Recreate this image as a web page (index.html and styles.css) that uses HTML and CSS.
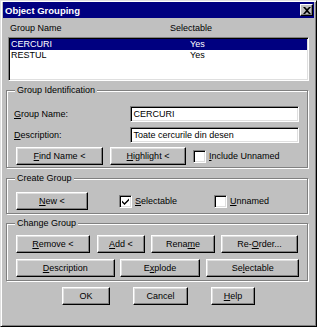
FILE: index.html
```html
<!DOCTYPE html>
<html lang="en">
<head>
    <meta charset="UTF-8">
    <title>Object Grouping</title>
    <link rel="stylesheet" href="styles.css">
</head>
<body>
    <div class="dialog">
        <div class="titlebar">
            <span class="title">Object Grouping</span>
            <span class="close">
                <svg width="8" height="7" viewBox="0 0 8 7"><path d="M0 0h2l2 2 2-2h2L5 3.5 8 7H6L4 5 2 7H0l3-3.5z" fill="#000"/></svg>
            </span>
        </div>
        <div class="content">
            <div class="list-head">
                <span class="col-name">Group Name</span>
                <span>Selectable</span>
            </div>
            <div class="listbox">
                <div class="row selected"><span class="col-name">CERCURI</span><span>Yes</span></div>
                <div class="row"><span class="col-name">RESTUL</span><span>Yes</span></div>
            </div>

            <fieldset class="group group-ident">
                <legend>Group Identification</legend>
                <div class="field field-first">
                    <label><u>G</u>roup Name:</label>
                    <div class="input">CERCURI</div>
                </div>
                <div class="field">
                    <label><u>D</u>escription:</label>
                    <div class="input">Toate cercurile din desen</div>
                </div>
                <div class="btn-row">
                    <button class="btn w-find"><u>F</u>ind Name &lt;</button>
                    <button class="btn w-highlight"><u>H</u>ighlight &lt;</button>
                    <span class="check-item check-include"><span class="check"></span><u>I</u>nclude Unnamed</span>
                </div>
            </fieldset>

            <fieldset class="group group-create">
                <legend>Create Group</legend>
                <div class="btn-row">
                    <button class="btn w-new"><u>N</u>ew &lt;</button>
                    <span class="check-item check-selectable">
                        <span class="check">
                            <svg width="9" height="9" viewBox="0 0 9 9"><path d="M1 3.5l2.5 2.5L8 1.5v2L3.5 8 1 5.5z" fill="#000"/></svg>
                        </span><u>S</u>electable
                    </span>
                    <span class="check-item"><span class="check"></span><u>U</u>nnamed</span>
                </div>
            </fieldset>

            <fieldset class="group group-change">
                <legend>Change Group</legend>
                <div class="btn-row row-one">
                    <button class="btn w-remove"><u>R</u>emove &lt;</button>
                    <button class="btn w-add"><u>A</u>dd &lt;</button>
                    <button class="btn w-rename">Rena<u>m</u>e</button>
                    <button class="btn w-reorder">Re-<u>O</u>rder...</button>
                </div>
                <div class="btn-row row-two">
                    <button class="btn w-desc"><u>D</u>escription</button>
                    <button class="btn w-explode">E<u>x</u>plode</button>
                    <button class="btn w-selectable">Se<u>l</u>ectable</button>
                </div>
            </fieldset>

            <div class="dialog-buttons">
                <button class="btn w-ok">OK</button>
                <button class="btn w-cancel">Cancel</button>
                <button class="btn w-help"><u>H</u>elp</button>
            </div>
        </div>
    </div>
</body>
</html>
```

FILE: styles.css
```css
* {
    box-sizing: border-box;
}

body {
    margin: 0;
    background: #fff;
    font-family: "Liberation Sans", Arial, sans-serif;
    font-size: 9px;
    color: #000;
}

.dialog {
    width: 317px;
    height: 327px;
    background: #c0c0c0;
    border: 1px solid;
    border-color: #dfdfdf #000 #000 #dfdfdf;
    box-shadow: inset 1px 1px #fff, inset -1px -1px #808080;
    padding: 1px 2px 0 2px;
}

.titlebar {
    height: 16px;
    background: #000080;
    color: #fff;
    font-weight: bold;
    font-size: 9.5px;
    display: flex;
    align-items: center;
    justify-content: space-between;
    padding: 0 1px 0 2px;
}

.close {
    width: 13px;
    height: 12px;
    background: #c0c0c0;
    border: 1px solid;
    border-color: #fff #000 #000 #fff;
    box-shadow: inset -1px -1px #808080;
    display: flex;
    align-items: center;
    justify-content: center;
}

.content {
    padding: 0 6px 0 3px;
}

.list-head {
    display: flex;
    height: 15px;
    line-height: 12px;
    margin-top: 4px;
    padding-left: 4px;
}

.list-head .col-name {
    width: 160px;
}

.listbox {
    margin-left: 2px;
    width: 301px;
    height: 44px;
    background: #fff;
    border: 1px solid;
    border-color: #808080 #fff #fff #808080;
    box-shadow: inset 1px 1px #000, inset -1px -1px #dfdfdf;
    padding: 1px;
}

.row {
    display: flex;
    height: 11px;
    line-height: 11px;
    padding-left: 1px;
}

.row .col-name {
    width: 179px;
}

.row.selected {
    background: #000080;
    color: #fff;
}

.group {
    margin: 3px 0 0;
    width: 302px;
    min-width: 0;
    padding: 0 8px 2px;
    border: 1px solid #808080;
    box-shadow: inset 1px 1px #fff, 1px 1px #fff;
}

.group legend {
    padding: 0 2px;
    line-height: 13px;
    background: #c0c0c0;
}

.group-create {
    margin-top: 4px;
    padding-bottom: 3px;
}

.group-change {
    padding-bottom: 3px;
}

.field {
    display: flex;
    align-items: center;
    height: 16px;
    margin-top: 5px;
}

.field-first {
    margin-top: 9px;
}

.field label {
    width: 116px;
    margin-left: -1px;
}

.input {
    width: 170px;
    height: 16px;
    background: #fff;
    border: 1px solid;
    border-color: #808080 #fff #fff #808080;
    box-shadow: inset 1px 1px #000, inset -1px -1px #dfdfdf;
    padding-left: 3px;
    line-height: 14px;
}

.btn-row {
    display: flex;
    align-items: center;
    margin-top: 4px;
    padding-left: 1px;
}

.group-create .btn-row {
    margin-top: 7px;
}

.group-change .row-one {
    margin-top: 5px;
}

.group-change .row-two {
    margin-top: 6px;
}

.btn {
    height: 18px;
    padding: 0;
    font: inherit;
    color: #000;
    background: #c0c0c0;
    border: 1px solid;
    border-color: #fff #000 #000 #fff;
    box-shadow: inset -1px -1px #808080, inset 1px 1px #dfdfdf;
    text-align: center;
}

.btn + .btn {
    margin-left: 7px;
}

.w-find { width: 87px; }
.w-highlight { width: 76px; }
.w-new { width: 72px; }
.w-remove { width: 74px; }
.w-add { width: 48px; }
.w-rename { width: 64px; margin-left: 6px !important; }
.w-reorder { width: 77px; margin-left: 6px !important; }
.w-desc { width: 99px; }
.w-explode { width: 81px; margin-left: 5px !important; }
.w-selectable { width: 93px; margin-left: 6px !important; }
.w-ok { width: 48px; }
.w-cancel { width: 55px; margin-left: 23px !important; }
.w-help { width: 44px; margin-left: 23px !important; }

.check-item {
    display: flex;
    align-items: center;
}

.check-include {
    margin-left: 7px;
}

.check-selectable {
    margin-left: 31px;
    width: 95px;
}

.check {
    width: 13px;
    height: 13px;
    background: #fff;
    border: 1px solid;
    border-color: #808080 #fff #fff #808080;
    box-shadow: inset 1px 1px #000, inset -1px -1px #dfdfdf;
    margin-right: 3px;
    display: flex;
    align-items: center;
    justify-content: center;
}

.dialog-buttons {
    display: flex;
    margin-top: 6px;
    padding-left: 56px;
}
```
